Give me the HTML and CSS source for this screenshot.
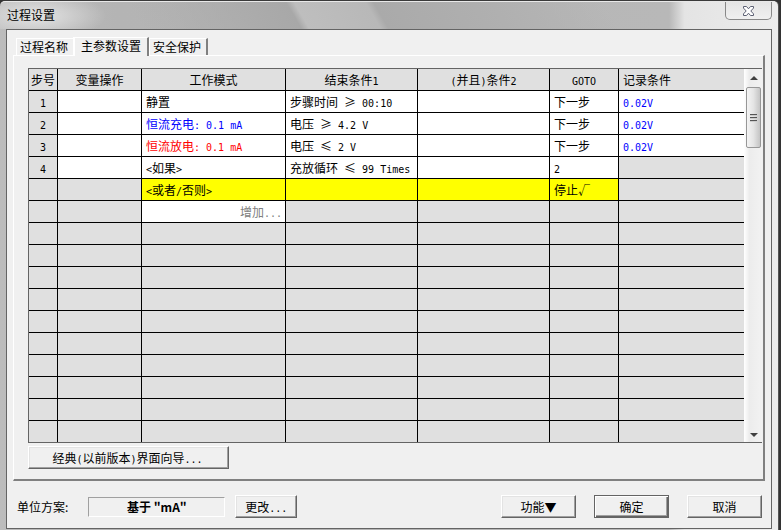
FILE: index.html
```html
<!DOCTYPE html>
<html lang="zh-CN">

<head>
    <meta charset="UTF-8">
    <meta name="viewport" content="width=device-width, initial-scale=1.0">
    <title>过程设置</title>
    <link rel="stylesheet" href="styles.css">
</head>

<body>
    <div class="window">
        <!-- Title bar -->
        <header class="title-bar">
            <h1>过程设置</h1>
            <button type="button" class="close-button" aria-label="关闭">
                <svg width="13" height="12" viewBox="0 0 13 12">
                    <path d="M1.5 1.5h3l2 2.3 2-2.3h3v1.6L8.8 6l2.7 2.9v1.6h-3l-2-2.3-2 2.3h-3V8.9L4.2 6 1.5 3.1z" fill="#fff" stroke="#5c6073" />
                </svg>
            </button>
        </header>

        <main class="client">
            <!-- Tabs -->
            <div class="tabs" role="tablist">
                <button type="button" class="tab" role="tab">过程名称</button>
                <button type="button" class="tab active" role="tab" aria-selected="true">主参数设置</button>
                <button type="button" class="tab" role="tab">安全保护</button>
            </div>

            <section class="panel">
                <div class="grid">
                    <table>
                        <colgroup>
                            <col class="col-no">
                            <col class="col-var">
                            <col class="col-mode">
                            <col class="col-cond">
                            <col class="col-cond">
                            <col class="col-goto">
                            <col>
                        </colgroup>
                        <thead>
                            <tr>
                                <th>步号</th>
                                <th>变量操作</th>
                                <th>工作模式</th>
                                <th>结束条件<span class="mono">1</span></th>
                                <th><span class="mono">(</span>并且<span class="mono">)</span>条件<span class="mono">2</span></th>
                                <th><span class="mono">GOTO</span></th>
                                <th class="left">记录条件</th>
                            </tr>
                        </thead>
                        <tbody>
                            <tr class="step">
                                <th><span class="mono">1</span></th>
                                <td></td>
                                <td>静置</td>
                                <td>步骤时间<span class="mono"> </span>≥<span class="mono"> 00:10</span></td>
                                <td></td>
                                <td>下一步</td>
                                <td class="charge"><span class="mono">0.02V</span></td>
                            </tr>
                            <tr class="step">
                                <th><span class="mono">2</span></th>
                                <td></td>
                                <td class="charge">恒流充电<span class="mono">: 0.1 mA</span></td>
                                <td>电压<span class="mono"> </span>≥<span class="mono"> 4.2 V</span></td>
                                <td></td>
                                <td>下一步</td>
                                <td class="charge"><span class="mono">0.02V</span></td>
                            </tr>
                            <tr class="step">
                                <th><span class="mono">3</span></th>
                                <td></td>
                                <td class="discharge">恒流放电<span class="mono">: 0.1 mA</span></td>
                                <td>电压<span class="mono"> </span>≤<span class="mono"> 2 V</span></td>
                                <td></td>
                                <td>下一步</td>
                                <td class="charge"><span class="mono">0.02V</span></td>
                            </tr>
                            <tr class="step">
                                <th><span class="mono">4</span></th>
                                <td></td>
                                <td><span class="mono">&lt;</span>如果<span class="mono">&gt;</span></td>
                                <td>充放循环<span class="mono"> </span>≤<span class="mono"> 99 Times</span></td>
                                <td></td>
                                <td><span class="mono">2</span></td>
                                <td class="off"></td>
                            </tr>
                            <tr>
                                <th></th>
                                <td></td>
                                <td class="else"><span class="mono">&lt;</span>或者<span class="mono">/</span>否则<span class="mono">&gt;</span></td>
                                <td class="else"></td>
                                <td class="else"></td>
                                <td class="else">停止√</td>
                                <td></td>
                            </tr>
                            <tr>
                                <th></th>
                                <td></td>
                                <td class="add">增加<span class="mono">...</span></td>
                                <td></td>
                                <td></td>
                                <td></td>
                                <td></td>
                            </tr>
                            <tr><th></th><td></td><td></td><td></td><td></td><td></td><td></td></tr>
                            <tr><th></th><td></td><td></td><td></td><td></td><td></td><td></td></tr>
                            <tr><th></th><td></td><td></td><td></td><td></td><td></td><td></td></tr>
                            <tr><th></th><td></td><td></td><td></td><td></td><td></td><td></td></tr>
                            <tr><th></th><td></td><td></td><td></td><td></td><td></td><td></td></tr>
                            <tr><th></th><td></td><td></td><td></td><td></td><td></td><td></td></tr>
                            <tr><th></th><td></td><td></td><td></td><td></td><td></td><td></td></tr>
                            <tr><th></th><td></td><td></td><td></td><td></td><td></td><td></td></tr>
                            <tr><th></th><td></td><td></td><td></td><td></td><td></td><td></td></tr>
                            <tr><th></th><td></td><td></td><td></td><td></td><td></td><td></td></tr>
                        </tbody>
                    </table>

                    <!-- Scrollbar -->
                    <div class="scrollbar">
                        <svg class="arrow" width="8" height="4" viewBox="0 0 8 4"><path d="M4 0l4 4H0z" fill="#404040" /></svg>
                        <div class="thumb"><i></i><i></i><i></i></div>
                        <svg class="arrow" width="8" height="4" viewBox="0 0 8 4"><path d="M0 0h8L4 4z" fill="#404040" /></svg>
                    </div>
                </div>
                <button type="button" class="button wizard">经典<span class="mono">(</span>以前版本<span class="mono">)</span>界面向导<span class="mono">...</span></button>
            </section>

            <!-- Unit scheme and dialog buttons -->
            <footer class="actions">
                <label for="unit">单位方案:</label>
                <input type="text" id="unit" class="unit" value='基于 "mA"' readonly>
                <button type="button" class="button change">更改<span class="mono">...</span></button>
                <div class="dialog-buttons">
                    <button type="button" class="button">功能▼</button>
                    <button type="submit" class="button default">确定</button>
                    <button type="button" class="button">取消</button>
                </div>
            </footer>
        </main>
    </div>
</body>

</html>
```

FILE: styles.css
```css
/* Base Styles */
* {
    margin: 0;
    padding: 0;
    box-sizing: border-box;
}

body {
    background-color: #333;
    color: #000;
    font-family: "Noto Sans CJK SC", sans-serif;
    font-size: 12px;
    line-height: 20px;
}

button,
input {
    font: inherit;
    color: inherit;
}

/* Half-width characters, 6px each */
.mono {
    font-family: "DejaVu Sans Mono", monospace;
    font-size: 10px;
    line-height: 10px;
    white-space: pre;
}

/* Window Frame */
.window {
    margin-right: 2px;
    padding: 0 6px 1px;
    border-top: 1px solid #3a3a3a;
    border-right: 1px solid #555;
    border-radius: 6px 6px 0 0;
    background: linear-gradient(90deg, #bcbcbc, #b4b4b4 15%, #b8b8b8 86%, #e4e4e4 88%, #ececec);
}

.title-bar {
    display: flex;
    justify-content: space-between;
    height: 28px;
    margin: 0 -6px;
    padding: 0 6px;
    border-top: 1px solid #e8e8e8;
    border-radius: 5px 5px 0 0;
    background:
        radial-gradient(70px 24px at 36px 14px, #e4e4e4, transparent),
        linear-gradient(60deg, transparent 18%, #a8a8a8 38%, #bebebe 39%, #b8b8b8 48%, #aaa 49%, #b0b0b0 64%, transparent 78%);
}

.title-bar h1 {
    padding: 3px 1px;
    font-size: 12px;
    font-weight: 400;
}

.close-button {
    display: flex;
    justify-content: center;
    align-items: center;
    width: 47px;
    height: 18px;
    border: 1px solid #888;
    border-top: none;
    border-radius: 0 0 5px 5px;
    background: linear-gradient(#e4e4e4, #f0f0f0);
}

.client {
    padding: 7px 6px 10px;
    border: 1px solid #646464;
    background-color: #f0f0f0;
}

/* Tabs */
.tabs {
    display: flex;
    align-items: flex-end;
    padding-left: 3px;
}

.tab {
    height: 17px;
    padding: 0 5px 0 3px;
    border: solid #fff;
    border-width: 1px 0 0 1px;
    background-color: #f0f0f0;
    line-height: 14px;
}

.tab.active {
    height: 19px;
    margin-bottom: -1px;
    padding: 0 6px 3px;
    border-left-width: 2px;
}

.tab.active,
.tab:last-child {
    border-right: 2px solid #808080;
}

.panel {
    padding: 12px 1px 10px 14px;
    border: 2px solid #808080;
    border-top: 1px solid #fff;
    border-left: 1px solid #fff;
}

/* Step Grid */
.grid {
    display: flex;
    border: 1px solid #646464;
    border-right: none;
    background-color: #e0e0e0;
}

.grid table {
    flex: 1;
    table-layout: fixed;
    border-spacing: 0;
}

.col-no {
    width: 29px;
}

.col-var {
    width: 84px;
}

.col-mode {
    width: 144px;
}

.col-cond {
    width: 132px;
}

.col-goto {
    width: 69px;
}

th,
td {
    height: 22px;
    border-right: 1px solid #000;
    border-bottom: 1px solid #000;
    font-weight: 400;
    text-align: center;
    white-space: nowrap;
}

td,
th.left {
    padding-left: 4px;
    text-align: left;
}

th:last-child,
td:last-child {
    border-right: none;
}

tbody tr:last-child > * {
    height: 21px;
    border-bottom: none;
}

.step td,
td.add {
    background-color: #fff;
}

.step td.off {
    background-color: #e0e0e0;
}

td.else {
    background-color: #ff0;
}

td.charge {
    color: #00f;
}

td.discharge {
    color: #f00;
}

td.add {
    padding-right: 3px;
    color: #808080;
    text-align: right;
}

/* Scrollbar */
.scrollbar {
    display: flex;
    flex-direction: column;
    align-items: center;
    width: 18px;
    padding: 7px 1px 5px 2px;
    background: linear-gradient(90deg, #fff, #ececec 30%, #f2f2f2);
}

.thumb {
    display: flex;
    flex-direction: column;
    justify-content: center;
    align-items: center;
    gap: 1px;
    width: 15px;
    height: 61px;
    margin: 7px 0 auto;
    border: 1px solid #979797;
    border-radius: 2px;
    background: linear-gradient(90deg, #f4f4f4, #e4e4e4 50%, #c4c4c4);
}

.thumb i {
    width: 7px;
    height: 2px;
    background-color: #555;
    border-bottom: 1px solid #ccc;
}

/* Buttons */
.button {
    width: 75px;
    height: 23px;
    border: 1px solid;
    border-color: #fff #646464 #646464 #fff;
    background-color: #f0f0f0;
    box-shadow: inset -1px -1px #a0a0a0, inset 1px 1px #e3e3e3;
}

.button.default {
    border-color: #646464;
    box-shadow: inset 1px 1px #fff, inset -1px -1px #646464, inset -2px -2px #a0a0a0;
}

.wizard {
    display: block;
    width: 201px;
    margin-top: 3px;
    padding-right: 2px;
}

/* Bottom Row */
.actions {
    display: flex;
    align-items: center;
    padding: 14px 3px 0 4px;
}

.unit {
    width: 137px;
    height: 20px;
    margin: 0 10px 0 20px;
    border: 1px solid;
    border-color: #a0a0a0 #fff #fff #a0a0a0;
    background-color: #f0f0f0;
    font-weight: 700;
    text-align: center;
}

.change {
    width: 62px;
}

.dialog-buttons {
    display: flex;
    gap: 18px;
    margin-left: auto;
}
```
